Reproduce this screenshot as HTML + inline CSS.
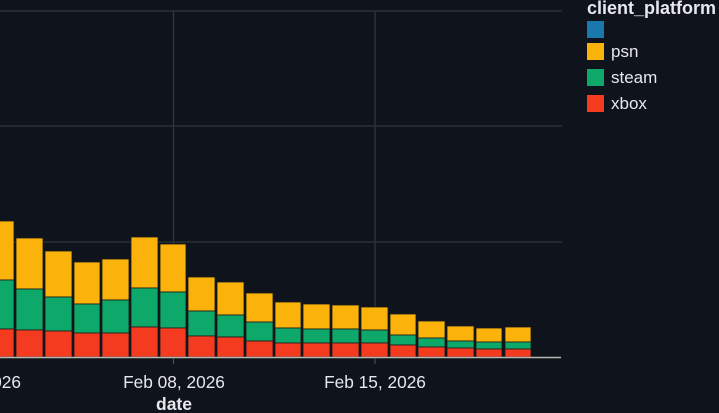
<!DOCTYPE html>
<html><head><meta charset="utf-8"><style>
html,body{margin:0;padding:0;background:#0f131c;width:719px;height:413px;overflow:hidden}
svg{display:block}
text{font-family:"Liberation Sans",sans-serif;fill:#e6e8ec}
</style></head><body>
<svg width="719" height="413" xmlns="http://www.w3.org/2000/svg">
<rect width="719" height="413" fill="#0f131c"/>
<g stroke="#30343b" stroke-width="1.3">
<line x1="0" y1="11" x2="562" y2="11"/>
<line x1="0" y1="126" x2="562" y2="126"/>
<line x1="0" y1="242" x2="562" y2="242"/>
<line x1="173.5" y1="11" x2="173.5" y2="357"/>
<line x1="375" y1="11" x2="375" y2="357"/>
</g>
<g id="bars" stroke="#1a1a1a" stroke-width="0.8"></g>
<line x1="0" y1="357.5" x2="561" y2="357.5" stroke="#b8b8b0" stroke-width="1.5"/>
<line x1="173.5" y1="358" x2="173.5" y2="364" stroke="#555" stroke-width="1"/>
<line x1="375" y1="358" x2="375" y2="364" stroke="#555" stroke-width="1"/>
<text x="-30" y="388" font-size="17.3" text-anchor="middle">Feb 01, 2026</text>
<text x="174" y="388" font-size="17.3" text-anchor="middle">Feb 08, 2026</text>
<text x="375" y="388" font-size="17.3" text-anchor="middle">Feb 15, 2026</text>
<text x="174" y="410" font-size="17.5" font-weight="bold" text-anchor="middle">date</text>
<text x="587" y="14" font-size="18" font-weight="bold">client_platform</text>
<rect x="587" y="21" width="17" height="17" fill="#1a78ad"/>
<rect x="587" y="43" width="17" height="17" fill="#fbb20b"/>
<rect x="587" y="69" width="17" height="17" fill="#0fa86b"/>
<rect x="587" y="95" width="17" height="17" fill="#f53b1f"/>
<text x="611" y="57" font-size="17">psn</text>
<text x="611" y="83" font-size="17">steam</text>
<text x="611" y="109" font-size="17">xbox</text>
</svg>
<script>
var d=[[-13,14,221,280,329],[16,43,238,289,330],[45,72,251,297,331],[74,100,262,304,333],[102,129,259,300,333],[131,158,237,288,327],[160,186,244,292,328],[188,215,277,311,336],[217,244,282,315,337],[246,273,293,322,341],[275,301,302,328,343],[303,330,304,329,343],[332,359,305,329,343],[361,388,307,330,343],[390,416,314,335,345],[418,445,321,338,347],[447,474,326,341,348],[476,502,328,342,349],[505,531,327,342,349]];
var g=document.getElementById('bars'),s='';
d.forEach(function(b){var w=b[1]-b[0];
s+='<rect x="'+b[0]+'" y="'+b[2]+'" width="'+w+'" height="'+(b[3]-b[2])+'" fill="#fbb20b"/>';
s+='<rect x="'+b[0]+'" y="'+b[3]+'" width="'+w+'" height="'+(b[4]-b[3])+'" fill="#0fa86b"/>';
s+='<rect x="'+b[0]+'" y="'+b[4]+'" width="'+w+'" height="'+(357-b[4])+'" fill="#f53b1f"/>';});
g.innerHTML=s;
</script>
</body></html>
